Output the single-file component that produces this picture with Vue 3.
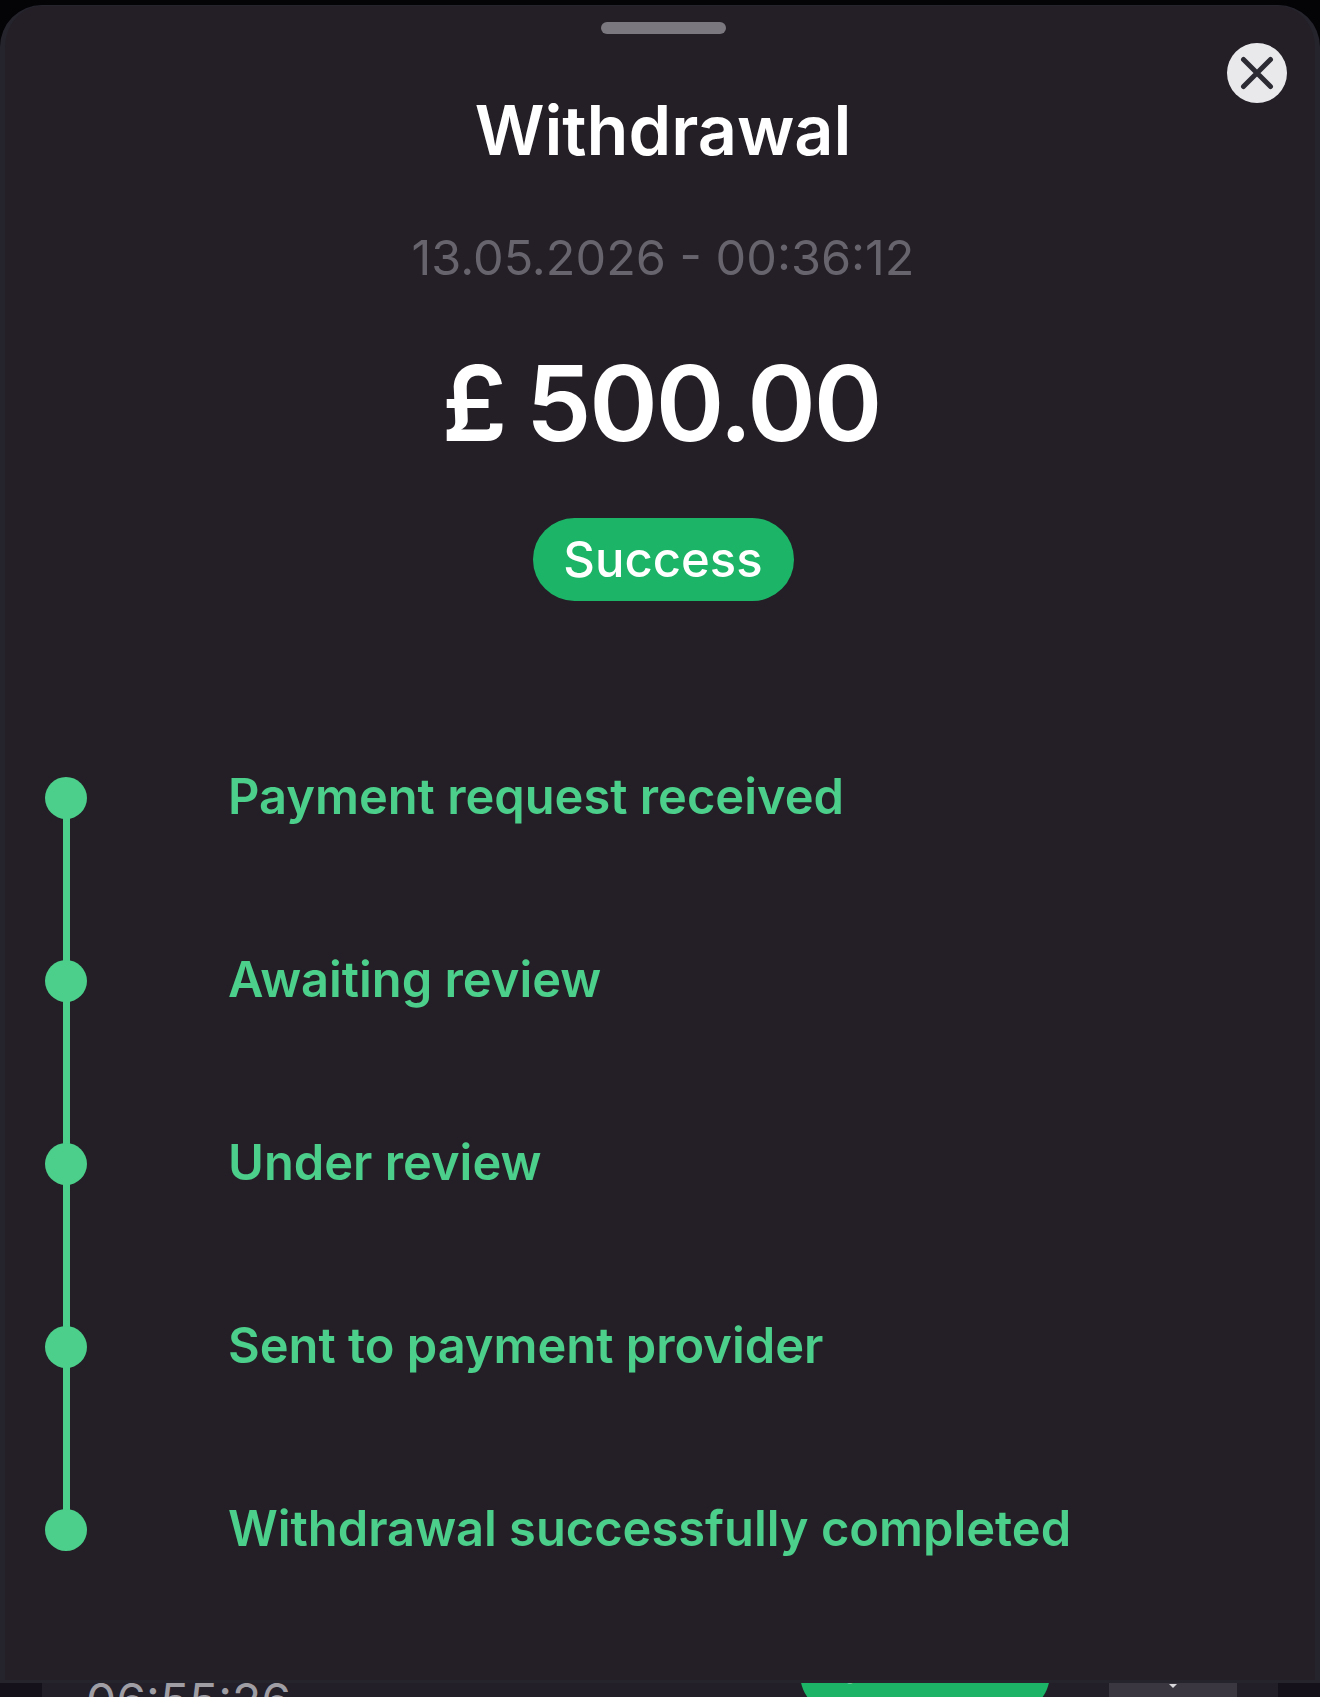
<template>
  <div class="page">
    <section class="sheet">
      <div class="handle"></div>
      <button class="close" aria-label="Close">
        <svg width="36" height="36" viewBox="0 0 36 36" fill="none">
          <path d="M4.5 4.5 L31.5 31.5 M31.5 4.5 L4.5 31.5" stroke="#2c2a33" stroke-width="5" stroke-linecap="round" />
        </svg>
      </button>
      <h1 class="title">Withdrawal</h1>
      <p class="date">13.05.2026 - 00:36:12</p>
      <p class="amount">£ 500.00</p>
      <span class="badge">Success</span>

      <ul class="steps">
        <li v-for="(step, i) in steps" :key="step" class="step">
          <span class="dot"></span>
          <span v-if="i < steps.length - 1" class="line"></span>
          <span class="label">{{ step }}</span>
        </li>
      </ul>
    </section>

    <div class="behind">
      <div class="behind-card">
        <span class="time">06:55:26</span>
        <span class="pill">Success</span>
        <span class="chip"><i></i></span>
      </div>
    </div>
  </div>
</template>

<script setup>
const steps = [
  'Payment request received',
  'Awaiting review',
  'Under review',
  'Sent to payment provider',
  'Withdrawal successfully completed',
];
</script>

<style>
html, body { margin: 0; background: #040306; }
</style>

<style scoped>
.page {
  width: 1320px;
  height: 1697px;
  overflow: hidden;
  background: #040306;
  font-family: Inter, "Liberation Sans", sans-serif;
  padding-top: 5px;
  box-sizing: border-box;
}

.sheet {
  position: relative;
  height: 1678px;
  box-sizing: border-box;
  background: #241f26;
  border: 1px solid #25242d;
  border-left-width: 5px;
  border-right-width: 5px;
  border-bottom-width: 3px;
  border-radius: 42px 42px 0 0;
  display: flex;
  flex-direction: column;
  align-items: center;
  padding-top: 16px;
  padding-left: 6px;
}

.handle {
  width: 125px;
  height: 12px;
  border-radius: 6px;
  background: #7b7880;
}

.close {
  position: absolute;
  top: 37px;
  right: 28px;
  width: 60px;
  height: 60px;
  padding: 0;
  border: 0;
  border-radius: 50%;
  background: #e9e9ec;
  display: flex;
  align-items: center;
  justify-content: center;
}

.title {
  margin: 57px 0 0;
  font-size: 68.4px;
  line-height: 78px;
  font-weight: 600;
  color: #fff;
}

.date {
  margin: 60px 0 0;
  font-size: 48.6px;
  line-height: 58px;
  font-weight: 400;
  color: #67646d;
}

.amount {
  margin: 52px 0 0 -4px;
  font-size: 104px;
  line-height: 128px;
  font-weight: 600;
  letter-spacing: -2.2px;
  word-spacing: -3px;
  color: #fff;
}

.badge {
  margin-top: 51px;
  width: 261px;
  height: 83px;
  border-radius: 42px;
  background: #1cb567;
  color: #fff;
  font-size: 49px;
  font-weight: 500;
  display: flex;
  align-items: center;
  justify-content: center;
}

.steps {
  list-style: none;
  margin: 175px 0 0 -6px;
  padding: 0;
  align-self: stretch;
}

.step {
  position: relative;
  height: 183px;
  display: flex;
  align-items: flex-start;
  padding-left: 40px;
}

.step:last-child { height: auto; }

.dot {
  width: 42px;
  height: 42px;
  margin-top: 1px;
  border-radius: 50%;
  background: #4bcf8a;
  flex: none;
}

.line {
  position: absolute;
  left: 58px;
  top: 41px;
  width: 7px;
  height: 145px;
  background: #4bcf8a;
}

.label {
  margin-left: 141px;
  font-size: 48.8px;
  line-height: 42px;
  font-weight: 600;
  color: #4bcf8a;
  white-space: nowrap;
}

.behind {
  height: 14px;
  padding: 0 42px;
  background: #15111a;
}

.behind-card {
  height: 14px;
  background: #231f29;
  overflow: hidden;
  display: grid;
  grid-template-columns: 758px 309px 128px;
  align-items: start;
}

.time {
  padding-left: 44px;
  margin-top: -11px;
  font-size: 48px;
  line-height: 58px;
  color: #a09ea5;
}

.pill {
  margin-top: -51px;
  width: 250px;
  height: 83px;
  box-sizing: border-box;
  padding-bottom: 14px;
  border-radius: 42px;
  background: #1cb567;
  color: #fff;
  font-size: 44px;
  font-weight: 500;
  display: flex;
  align-items: center;
  justify-content: center;
}

.chip {
  height: 14px;
  background: #3b3740;
  display: flex;
  justify-content: center;
}

.chip i {
  margin: 1px 0 0 0;
  width: 0;
  height: 0;
  border: 4px solid transparent;
  border-top-color: #d8d7db;
  border-bottom: 0;
}
</style>
